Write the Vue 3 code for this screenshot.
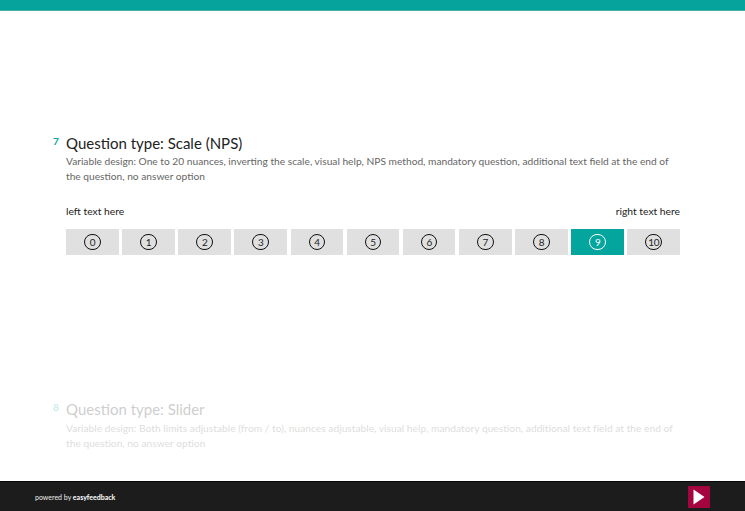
<script setup>
const options = [0, 1, 2, 3, 4, 5, 6, 7, 8, 9, 10]
const selected = 9
</script>

<template>
  <div class="page">
    <header class="topbar"></header>
    <main class="content">
      <section class="question">
        <div class="head">
          <span class="num">7</span>
          <h2 class="title">Question type: Scale (NPS)</h2>
        </div>
        <p class="desc">Variable design: One to 20 nuances, inverting the scale, visual help, NPS method, mandatory question, additional text field at the end of the question, no answer option</p>
        <div class="labels">
          <span>left text here</span>
          <span>right text here</span>
        </div>
        <div class="scale">
          <div v-for="o in options" :key="o" class="cell" :class="{ active: o === selected }">
            <span class="circle">{{ o }}</span>
          </div>
        </div>
      </section>
      <section class="question faded">
        <div class="head">
          <span class="num">8</span>
          <h2 class="title">Question type: Slider</h2>
        </div>
        <p class="desc">Variable design: Both limits adjustable (from / to), nuances adjustable, visual help, mandatory question, additional text field at the end of the question, no answer option</p>
      </section>
    </main>
    <footer class="footer">
      <span class="powered">powered by <b>easyfeedback</b></span>
      <button class="next" type="button" aria-label="Next">
        <svg width="12" height="16" viewBox="0 0 12 16"><path d="M0.5 0.5 L11.5 8 L0.5 15.5 Z" fill="#fff" /></svg>
      </button>
    </footer>
  </div>
</template>

<style>
html, body { margin: 0; background: #fff; }
</style>

<style scoped>
.page {
  width: 745px;
  height: 511px;
  display: flex;
  flex-direction: column;
  overflow: hidden;
  font-family: Lato, "Liberation Sans", sans-serif;
  background: #fff;
}
.topbar {
  height: 11px;
  flex: none;
  background: #05a39b;
  border-bottom: 1px solid #3fb0a9;
  box-sizing: border-box;
}
.content {
  flex: 1;
  min-height: 0;
  padding: 122px 65px 0 66px;
  display: flex;
  flex-direction: column;
}
.question { display: flex; flex-direction: column; }
.faded { margin-top: 144px; opacity: 0.22; }
.head { position: relative; }
.num {
  position: absolute;
  left: -13px;
  top: 2px;
  font-size: 10px;
  line-height: 12px;
  font-weight: 700;
  color: #03a59d;
}
.title {
  margin: 0;
  font-size: 15px;
  line-height: 20px;
  font-weight: 400;
  color: #222;
}
.desc {
  margin: 1px 0 0;
  font-size: 10.2px;
  line-height: 15px;
  color: #666;
  width: 610px;
}
.faded .desc {
  margin-top: 2px;
  letter-spacing: 0.025px;
}
.labels {
  display: flex;
  justify-content: space-between;
  margin-top: 20px;
  font-size: 10.3px;
  line-height: 14px;
  color: #222;
}
.scale {
  display: grid;
  grid-template-columns: repeat(11, 1fr);
  gap: 3.5px;
  margin-top: 11px;
  width: 614px;
}
.cell {
  height: 26px;
  background: #e0e0e0;
  display: flex;
  align-items: center;
  justify-content: center;
}
.circle {
  width: 14.5px;
  height: 14.5px;
  border: 1.6px solid #111;
  border-radius: 50%;
  display: flex;
  align-items: center;
  justify-content: center;
  font-size: 10px;
  color: #222;
  letter-spacing: -0.5px;
}
.active { background: #03a59d; }
.active .circle { border-color: #fff; color: #fff; }
.footer {
  height: 30px;
  flex: none;
  box-sizing: border-box;
  background: #1c1c1c;
  border-top: 1px solid #050505;
  display: flex;
  align-items: center;
  justify-content: space-between;
  padding: 0 35px;
}
.powered { font-size: 7px; color: #eee; }
.powered b { color: #fff; font-weight: 700; }
.next {
  width: 22px;
  height: 22px;
  padding: 0;
  border: 0;
  background: #a5053f;
  display: flex;
  align-items: center;
  justify-content: center;
}
</style>
